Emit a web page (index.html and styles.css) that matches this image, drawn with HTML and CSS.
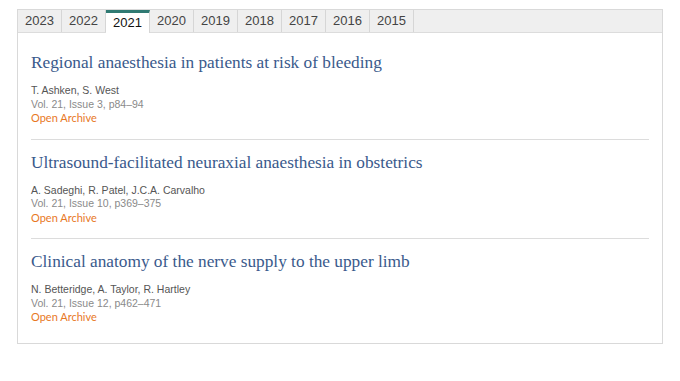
FILE: index.html
```html
<!DOCTYPE html>
<html>
<head>
    <meta charset="utf-8">
    <title>Articles by year</title>
    <link rel="stylesheet" href="styles.css">
</head>
<body>
    <div class="panel">
        <div class="tabs">
            <div class="tab">2023</div>
            <div class="tab">2022</div>
            <div class="tab active">2021</div>
            <div class="tab">2020</div>
            <div class="tab">2019</div>
            <div class="tab">2018</div>
            <div class="tab">2017</div>
            <div class="tab">2016</div>
            <div class="tab">2015</div>
        </div>
        <div class="articles">
            <div class="article">
                <a class="title" href="#">Regional anaesthesia in patients at risk of bleeding</a>
                <div class="authors">T. Ashken, S. West</div>
                <div class="issue">Vol. 21, Issue 3, p84&ndash;94</div>
                <div class="access">Open Archive</div>
            </div>
            <div class="article">
                <a class="title" href="#">Ultrasound-facilitated neuraxial anaesthesia in obstetrics</a>
                <div class="authors">A. Sadeghi, R. Patel, J.C.A. Carvalho</div>
                <div class="issue">Vol. 21, Issue 10, p369&ndash;375</div>
                <div class="access">Open Archive</div>
            </div>
            <div class="article">
                <a class="title" href="#">Clinical anatomy of the nerve supply to the upper limb</a>
                <div class="authors">N. Betteridge, A. Taylor, R. Hartley</div>
                <div class="issue">Vol. 21, Issue 12, p462&ndash;471</div>
                <div class="access">Open Archive</div>
            </div>
        </div>
    </div>
</body>
</html>
```

FILE: styles.css
```css
body {
    background-color: #fff;
    font-family: "Liberation Sans", Arial, sans-serif;
    margin: 0;
    padding: 9px 0 0 17px;
}
.panel {
    width: 644px;
    border: 1px solid #d9d9d9;
    background-color: #fff;
}
.tabs {
    display: flex;
    background-color: #efefef;
    border-bottom: 1px solid #dcdcdc;
    height: 22px;
}
.tab {
    width: 43px;
    border-right: 1px solid #d6d6d6;
    font-size: 13px;
    color: #444;
    text-align: center;
    line-height: 22px;
}
.tab.active {
    background-color: #fff;
    color: #111;
    border-top: 3px solid #2f7a73;
    line-height: 19px;
    margin-bottom: -1px;
    height: 20px;
}
.articles {
    padding: 7px 13px 5px 13px;
}
.article {
    padding: 12px 0 14px;
    border-bottom: 1px solid #dcdcdc;
}
.article:last-child {
    border-bottom: none;
}
.title {
    display: block;
    font-family: "Liberation Serif", Georgia, serif;
    font-size: 17.3px;
    line-height: 22px;
    color: #3a5a8c;
    text-decoration: none;
    margin-bottom: 10px;
}
.authors, .issue, .access {
    font-size: 10.5px;
    line-height: 13.5px;
}
.authors {
    color: #555;
}
.issue {
    color: #8a8a8a;
}
.access {
    font-family: Lato, sans-serif;
    font-size: 11px;
    color: #e8791f;
}
```
